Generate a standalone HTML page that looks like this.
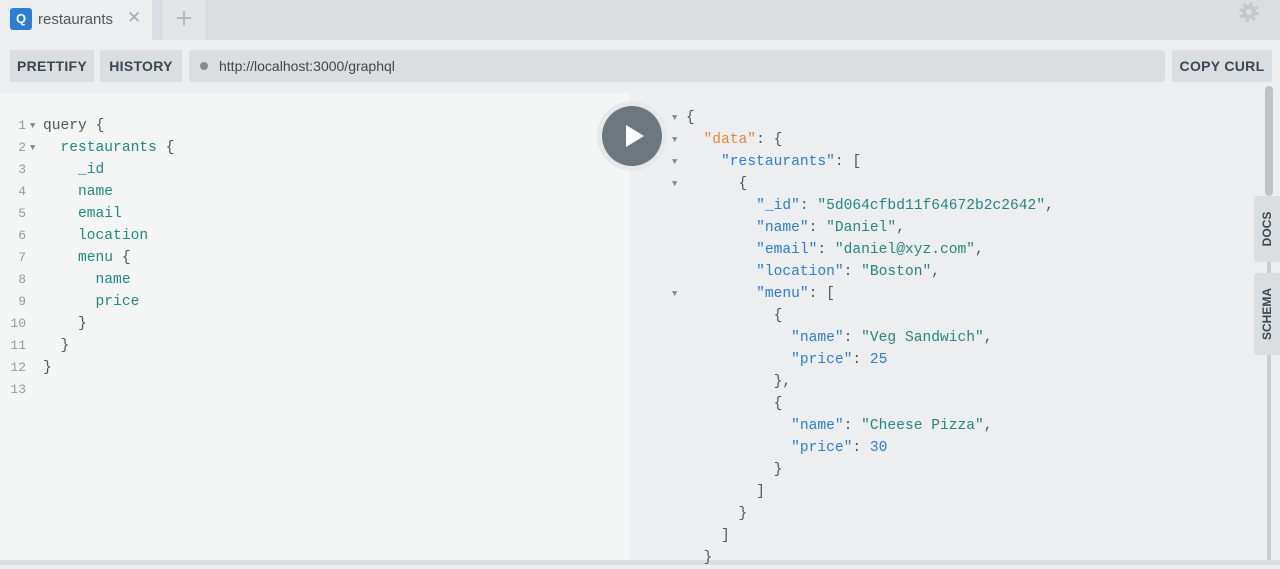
<!DOCTYPE html>
<html><head><style>
body{margin:0;width:1280px;height:565px;overflow:hidden;background:#eceeef;font-family:"Liberation Sans",sans-serif;position:relative}
.top{position:absolute;left:0;top:0;width:1280px;height:40px;background:#dbdee1}
.tab{position:absolute;left:0;top:0;width:152px;height:40px;background:#eceeef}
.q{position:absolute;left:10px;top:8px;width:22px;height:22px;background:#2a7ed3;border-radius:3px;color:#fff;font-weight:bold;font-size:13px;text-align:center;line-height:22px}
.tname{position:absolute;left:38px;top:11px;font-size:15px;color:#555}
.x{position:absolute;left:127px;top:8px;font-size:17px;color:#aaa}
.plus{position:absolute;left:163px;top:0;width:42px;height:40px;background:#e3e5e7;color:#b5b9bd;font-size:30px;text-align:center;line-height:38px}
.btn{position:absolute;top:50px;height:32px;background:#dbdee1;border-radius:2px;color:#3b4650;font-weight:bold;font-size:14px;letter-spacing:.3px;line-height:32px;text-align:center}
.url{position:absolute;left:189px;top:50px;width:976px;height:32px;background:#dbdee1;border-radius:3px;font-size:14px;color:#444;line-height:32px}
.dot{position:absolute;left:11px;top:12px;width:8px;height:8px;border-radius:50%;background:#888}
.left{position:absolute;left:0;top:93px;width:630px;height:467px;background:#f4f5f5}
.right{position:absolute;left:630px;top:93px;width:650px;height:467px;background:#eceeef}
.bot{position:absolute;left:0;top:560px;width:1280px;height:5px;background:#dbdee1}
pre{margin:0;font-family:"Liberation Mono",monospace;font-size:14.6px;line-height:22px;position:absolute}
.ln{color:#999;font-size:13px;text-align:right;width:26px}
.ar{color:#888;font-size:9px}
.kw{color:#555}.f{color:#1e8a80}.p{color:#555}
.k{color:#2a7ed3}.s{color:#24877d}.n{color:#2a7ed3}.d{color:#e7863e}
.run{position:absolute;left:597px;top:101px;width:70px;height:70px;border-radius:50%;background:#e6e8ea}
.run div{position:absolute;left:5px;top:5px;width:60px;height:60px;border-radius:50%;background:#6c7780}
.side{position:absolute;left:1254px;width:26px;background:#dbdee1;border-radius:3px 0 0 3px;color:#3b4650;font-weight:bold;font-size:12px}
.side span{position:absolute;left:50%;top:50%;transform:translate(-50%,-50%) rotate(-90deg);white-space:nowrap}
</style></head><body>
<div class="top"></div>
<div class="tab"><div class="q">Q</div><div class="tname">restaurants</div><div class="x">✕</div></div>
<div class="plus">+</div>
<svg style="position:absolute;left:1237px;top:0" width="24" height="24" viewBox="0 0 24 24"><circle cx="12" cy="12" r="8" fill="none" stroke="#c5c8cb" stroke-width="4" stroke-dasharray="3.2 3.1"/><circle cx="12" cy="12" r="7" fill="#c5c8cb"/><circle cx="12" cy="12" r="3" fill="#dbdee1"/></svg>
<div class="btn" style="left:10px;width:84px">PRETTIFY</div>
<div class="btn" style="left:100px;width:82px">HISTORY</div>
<div class="url"><div class="dot"></div><span style="position:absolute;left:30px">http://localhost:3000/graphql</span></div>
<div class="btn" style="left:1172px;width:100px">COPY CURL</div>
<div class="left"></div>
<div class="right"></div>
<div class="bot"></div>
<pre class="ln" style="left:0;top:115px">1
2
3
4
5
6
7
8
9
10
11
12
13</pre>
<pre class="ar" style="left:30px;top:115px">▼
▼</pre>
<pre style="left:43px;top:115px"><span class="kw">query</span> <span class="p">{</span>
  <span class="f">restaurants</span> <span class="p">{</span>
    <span class="f">_id</span>
    <span class="f">name</span>
    <span class="f">email</span>
    <span class="f">location</span>
    <span class="f">menu</span> <span class="p">{</span>
      <span class="f">name</span>
      <span class="f">price</span>
    <span class="p">}</span>
  <span class="p">}</span>
<span class="p">}</span>
</pre>
<pre class="ar" style="left:672px;top:107px">▼
▼
▼
▼




▼</pre>
<pre style="left:686px;top:107px"><span class="p">{</span>
  <span class="d">"data"</span><span class="p">: {</span>
    <span class="k">"restaurants"</span><span class="p">: [</span>
      <span class="p">{</span>
        <span class="k">"_id"</span><span class="p">: </span><span class="s">"5d064cfbd11f64672b2c2642"</span><span class="p">,</span>
        <span class="k">"name"</span><span class="p">: </span><span class="s">"Daniel"</span><span class="p">,</span>
        <span class="k">"email"</span><span class="p">: </span><span class="s">"daniel@xyz.com"</span><span class="p">,</span>
        <span class="k">"location"</span><span class="p">: </span><span class="s">"Boston"</span><span class="p">,</span>
        <span class="k">"menu"</span><span class="p">: [</span>
          <span class="p">{</span>
            <span class="k">"name"</span><span class="p">: </span><span class="s">"Veg Sandwich"</span><span class="p">,</span>
            <span class="k">"price"</span><span class="p">: </span><span class="n">25</span>
          <span class="p">},</span>
          <span class="p">{</span>
            <span class="k">"name"</span><span class="p">: </span><span class="s">"Cheese Pizza"</span><span class="p">,</span>
            <span class="k">"price"</span><span class="p">: </span><span class="n">30</span>
          <span class="p">}</span>
        <span class="p">]</span>
      <span class="p">}</span>
    <span class="p">]</span>
  <span class="p">}</span></pre>
<div class="run"><div><svg width="60" height="60"><polygon points="24,19 24,41 42,30" fill="#fff"/></svg></div></div>
<div style="position:absolute;left:1265px;top:86px;width:8px;height:110px;background:#bfc3c6;border-radius:4px"></div>
<div style="position:absolute;left:1267px;top:196px;width:4px;height:364px;background:#c9ccce"></div>
<div class="side" style="top:196px;height:66px"><span>DOCS</span></div>
<div class="side" style="top:273px;height:82px"><span>SCHEMA</span></div>
</body></html>
